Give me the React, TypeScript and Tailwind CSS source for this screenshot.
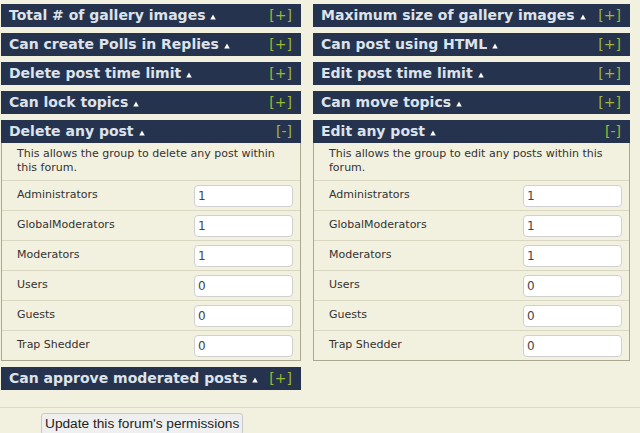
import React from 'react';

type Perm = { title: string; open?: boolean; desc?: string };

const groups: [string, string][] = [
  ['Administrators', '1'],
  ['GlobalModerators', '1'],
  ['Moderators', '1'],
  ['Users', '0'],
  ['Guests', '0'],
  ['Trap Shedder', '0'],
];

const left: Perm[] = [
  { title: 'Total # of gallery images' },
  { title: 'Can create Polls in Replies' },
  { title: 'Delete post time limit' },
  { title: 'Can lock topics' },
  { title: 'Delete any post', open: true, desc: 'This allows the group to delete any post within this forum.' },
  { title: 'Can approve moderated posts' },
];

const right: Perm[] = [
  { title: 'Maximum size of gallery images' },
  { title: 'Can post using HTML' },
  { title: 'Edit post time limit' },
  { title: 'Can move topics' },
  { title: 'Edit any post', open: true, desc: 'This allows the group to edit any posts within this forum.' },
];

function Header({ title, open }: { title: string; open?: boolean }) {
  return (
    <div className="flex h-[23px] items-center justify-between bg-[#25334f] pl-[8px] pr-[9px]">
      <span className="flex items-center text-[14px] font-bold text-[#dde3ea]">
        {title}
        <svg width="6" height="6" viewBox="0 0 6 6" className="ml-[5px] mt-[2px]">
          <path d="M3 0.5 L5.8 5.5 L0.2 5.5 Z" fill="#ffffff" />
        </svg>
      </span>
      <span className="text-[14px] text-[#9db832]">{open ? '[-]' : '[+]'}</span>
    </div>
  );
}

function Section({ p }: { p: Perm }) {
  return (
    <div>
      <Header title={p.title} open={p.open} />
      {p.open && (
        <div className="border border-t-0 border-[#aaa791]">
          <p className="px-[15px] pt-[4px] pb-[5px] text-[11px] leading-[14px] text-[#333]">{p.desc}</p>
          {groups.map(([name, val]) => (
            <div key={name} className="flex h-[30px] items-center justify-between border-t border-[#d9d6c2] pl-[15px] pr-[7px]">
              <span className="text-[11px] text-[#333]">{name}</span>
              <input
                defaultValue={val}
                className="h-[22px] w-[99px] rounded-[4px] border border-[#d0d0d0] bg-white px-[3px] text-[12px] text-[#444] outline-none"
              />
            </div>
          ))}
        </div>
      )}
    </div>
  );
}

export default function App() {
  return (
    <div className="h-[433px] w-[640px] overflow-hidden bg-[#f2f0de] font-['DejaVu_Sans',sans-serif]">
      <div className="flex gap-[12px] pl-[1px] pt-[4px]">
        <div className="flex w-[300px] flex-col gap-[6px]">
          {left.map((p) => (
            <Section key={p.title} p={p} />
          ))}
        </div>
        <div className="flex w-[317px] flex-col gap-[6px]">
          {right.map((p) => (
            <Section key={p.title} p={p} />
          ))}
        </div>
      </div>
      <div className="mt-[17px] border-t border-[#dcd9c5] pl-[41px] pt-[3px]">
        <button className="h-[22px] rounded-[3px] border border-[#c9c9c9] bg-[#efefef] px-[3px] font-['Liberation_Sans',Arial,sans-serif] text-[13.7px] text-[#222]">
          Update this forum's permissions
        </button>
      </div>
    </div>
  );
}
